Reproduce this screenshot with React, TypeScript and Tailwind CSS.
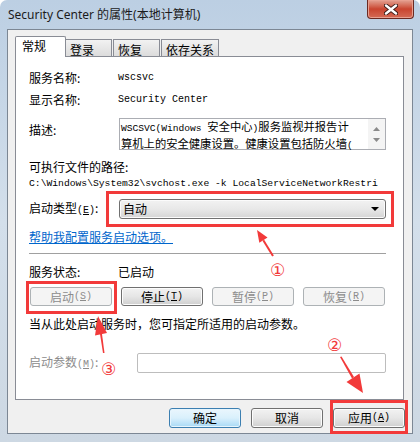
import React from "react";

function Btn({
  children,
  w,
  disabled,
  primary,
}: {
  children: React.ReactNode;
  w: string;
  disabled?: boolean;
  primary?: boolean;
}) {
  let cls =
    "flex items-center justify-center rounded-[3px] border h-full text-[12px] leading-[14px] ";
  if (disabled) cls += "border-[#adb2b5] bg-[#f4f4f4] text-[#8c8c8c]";
  else if (primary)
    cls +=
      "border-[#3c7fb1] bg-gradient-to-b from-[#eaf6fd] via-[#d9f0fc] to-[#a7d9f5] text-black shadow-[inset_0_0_0_1px_#e6f5fd]";
  else
    cls +=
      "border-[#707070] bg-gradient-to-b from-[#f2f2f2] via-[#e6e6e6] to-[#cfcfcf] text-black shadow-[inset_0_0_0_1px_#fcfcfc]";
  return <div className={cls + " " + w}>{children}</div>;
}

export default function App() {
  return (
    <div className="relative h-[442px] w-[420px] overflow-hidden rounded-t-[7px] bg-gradient-to-b from-[#bccfe3] via-[#d3dfeb] to-[#cdd8e3] font-['Noto_Sans_CJK_SC',sans-serif] text-[12px] text-black">
      {/* title bar */}
      <div className="flex h-[29px] items-start justify-between">
        <div className="pl-[8px] pt-[7px] font-['Noto_Sans','Noto_Sans_CJK_SC',sans-serif] text-[12px] leading-[16px] text-[#1b1b1b]">
          Security Center 的属性(本地计算机)
        </div>
        <div className="mr-[6px] flex h-[19px] w-[47px] items-center justify-center rounded-b-[4px] border border-t-0 border-[#6b2a22] bg-gradient-to-b from-[#e2a293] via-[#c9442f] to-[#d46a55] shadow-[inset_0_0_0_1px_#e8a090]">
          <svg width="14" height="11" viewBox="0 0 14 11">
            <path
              d="M2 1.5 L12 9.5 M12 1.5 L2 9.5"
              stroke="#3a1a16"
              strokeWidth="4.2"
              strokeLinecap="round"
            />
            <path
              d="M2 1.5 L12 9.5 M12 1.5 L2 9.5"
              stroke="#ffffff"
              strokeWidth="2.4"
              strokeLinecap="round"
            />
          </svg>
        </div>
      </div>

      {/* client area */}
      <div className="ml-[7px] h-[405px] w-[406px] border border-[#7c8794] bg-[#f0f0f0] px-[7px] pt-[6px]">
        {/* tabs */}
        <div className="flex h-[20px] items-end">
          <div className="relative z-10 -mb-px h-[21px] w-[51px] rounded-t-[2px] border border-b-0 border-[#898c95] bg-white pl-[6px] pt-[1px] leading-[15px]">
            常规
          </div>
          <div className="h-[17px] w-[46px] border border-b-0 border-l-0 border-[#898c95] bg-gradient-to-b from-[#f2f2f2] to-[#dcdcdc] pl-[4px] pt-[2px] leading-[15px]">
            登录
          </div>
          <div className="ml-[1px] h-[17px] w-[47px] border border-b-0 border-[#898c95] bg-gradient-to-b from-[#f2f2f2] to-[#dcdcdc] pl-[4px] pt-[2px] leading-[15px]">
            恢复
          </div>
          <div className="ml-[1px] h-[17px] w-[58px] border border-b-0 border-[#898c95] bg-gradient-to-b from-[#f2f2f2] to-[#dcdcdc] pl-[4px] pt-[2px] leading-[15px]">
            依存关系
          </div>
        </div>

        {/* panel */}
        <div className="flex h-[344px] w-[389px] flex-col border border-[#898c95] bg-white px-[13px]">
          <div className="mt-[13px] flex h-[16px] items-center leading-[16px]">
            <div className="w-[89px]">服务名称:</div>
            <div className="font-['Liberation_Mono',monospace] text-[10px]">wscsvc</div>
          </div>
          <div className="mt-[6px] flex h-[16px] items-center leading-[16px]">
            <div className="w-[89px]">显示名称:</div>
            <div className="font-['Liberation_Mono',monospace] text-[10px]">Security Center</div>
          </div>
          <div className="mt-[10px] flex items-start">
            <div className="mt-[4px] w-[90px] leading-[16px]">描述:</div>
            <div className="flex h-[32px] w-[267px] border border-[#abadb3] bg-white">
              <div className="flex-1 whitespace-nowrap pl-px text-[11.3px] leading-[14px]">
                <div>
                  <span className="font-['Liberation_Mono',monospace] text-[9.6px]">WSCSVC(Windows </span>
                  安全中心
                  <span className="font-['Liberation_Mono',monospace] text-[9.6px]">)</span>
                  服务监视并报告计
                </div>
                <div>
                  算机上的安全健康设置。健康设置包括防火墙
                  <span className="font-['Liberation_Mono',monospace] text-[9.6px]">(</span>
                </div>
              </div>
              <div className="flex w-[17px] flex-col items-center justify-center gap-[7px] bg-[#f4f4f4]">
                <svg width="7" height="4" viewBox="0 0 7 4">
                  <path d="M0 4 L3.5 0 L7 4 Z" fill="#8a8a8a" />
                </svg>
                <svg width="7" height="4" viewBox="0 0 7 4">
                  <path d="M0 0 L3.5 4 L7 0 Z" fill="#8a8a8a" />
                </svg>
              </div>
            </div>
          </div>
          <div className="mt-[9px] h-[16px] leading-[16px]">可执行文件的路径:</div>
          <div className="mt-[1px] h-[16px] whitespace-nowrap font-['Liberation_Mono',monospace] text-[9.7px] leading-[16px]">
            C:\Windows\System32\svchost.exe -k LocalServiceNetworkRestri
          </div>
          <div className="mt-[7px] flex h-[20px] items-center">
            <div className="w-[90px] leading-[16px]">
              启动类型<span className="font-['Liberation_Mono',monospace] text-[10px]">(<span className="underline">E</span>)</span>:
            </div>
            <div className="flex h-[20px] w-[267px] items-center justify-between rounded-[3px] border border-[#707070] bg-gradient-to-b from-[#f2f2f2] via-[#e8e8e8] to-[#d4d4d4] pl-[3px] pr-[6px] shadow-[inset_0_0_0_1px_#fbfbfb]">
              <span className="leading-[16px]">自动</span>
              <svg width="8" height="4" viewBox="0 0 8 4">
                <path d="M0 0 L8 0 L4 4 Z" fill="#000" />
              </svg>
            </div>
          </div>
          <div className="mt-[10px] h-[16px] leading-[16px] text-[#0066cc] underline">
            帮助我配置服务启动选项。
          </div>
          <div className="mt-[8px] h-px w-[357px] bg-[#a0a0a0]" />
          <div className="mt-[10px] flex h-[16px] items-center leading-[16px]">
            <div className="w-[89px]">服务状态:</div>
            <div>已启动</div>
          </div>
          <div className="ml-px mt-[7px] flex h-[19px] gap-[9px]">
            <Btn w="w-[82px]" disabled>
              启动<span className="font-['Liberation_Mono',monospace] text-[10px]">(<span className="underline">S</span>)</span>
            </Btn>
            <Btn w="w-[82px]">
              停止<span className="font-['Liberation_Mono',monospace] text-[10px]">(<span className="underline">T</span>)</span>
            </Btn>
            <Btn w="w-[82px]" disabled>
              暂停<span className="font-['Liberation_Mono',monospace] text-[10px]">(<span className="underline">P</span>)</span>
            </Btn>
            <Btn w="w-[82px]" disabled>
              恢复<span className="font-['Liberation_Mono',monospace] text-[10px]">(<span className="underline">R</span>)</span>
            </Btn>
          </div>
          <div className="mt-[10px] h-[16px] leading-[16px]">
            当从此处启动服务时，您可指定所适用的启动参数。
          </div>
          <div className="mt-[21px] flex h-[20px] items-center">
            <div className="w-[108px] leading-[16px] text-[#8c8c8c]">
              启动参数<span className="font-['Liberation_Mono',monospace] text-[10px]">(<span className="underline">M</span>)</span>:
            </div>
            <div className="h-[20px] w-[249px] rounded-[2px] border border-[#bdbdbd] bg-white" />
          </div>
        </div>

        {/* bottom buttons */}
        <div className="mt-[8px] flex h-[20px] justify-end gap-[10px]">
          <Btn w="w-[72px]" primary>
            确定
          </Btn>
          <Btn w="w-[72px]">取消</Btn>
          <Btn w="w-[72px]">
            应用<span className="font-['Liberation_Mono',monospace] text-[10px]">(<span className="underline">A</span>)</span>
          </Btn>
        </div>
      </div>

      {/* annotations */}
      <div className="pointer-events-none absolute left-[106px] top-[191px] h-[36px] w-[288px] border-[3px] border-[#f23a3a]" />
      <div className="pointer-events-none absolute left-[26px] top-[281px] h-[33px] w-[91px] border-[3px] border-[#f23a3a]" />
      <div className="pointer-events-none absolute left-[330px] top-[400px] h-[34px] w-[78px] border-[3px] border-[#f23a3a]" />

      <div className="pointer-events-none absolute left-[270px] top-[260px] font-['DejaVu_Sans',sans-serif] text-[17px] leading-[20px] text-[#f23a3a]">①</div>
      <div className="pointer-events-none absolute left-[327px] top-[335px] font-['DejaVu_Sans',sans-serif] text-[17px] leading-[20px] text-[#f23a3a]">②</div>
      <div className="pointer-events-none absolute left-[101px] top-[359px] font-['DejaVu_Sans',sans-serif] text-[17px] leading-[20px] text-[#f23a3a]">③</div>

      <svg className="pointer-events-none absolute left-0 top-0" width="420" height="442" viewBox="0 0 420 442">
        {/* arrow 1 */}
        <path d="M273 256 L263.3 240.2" stroke="#f23a3a" strokeWidth="2" />
        <polygon points="257,230 267.5,237.6 259.3,242.8" fill="#f23a3a" />
        {/* arrow 3 */}
        <polygon points="104.5,353 103,353 100,334 102,334" fill="#f23a3a" />
        <polygon points="98,316 107,333 95,335.5" fill="#f23a3a" />
        {/* arrow 2 */}
        <polygon points="340,357 341.5,356.5 354,377 352,378.5" fill="#f23a3a" />
        <polygon points="363,393 359.5,373.5 346.5,382" fill="#f23a3a" />
      </svg>
    </div>
  );
}
